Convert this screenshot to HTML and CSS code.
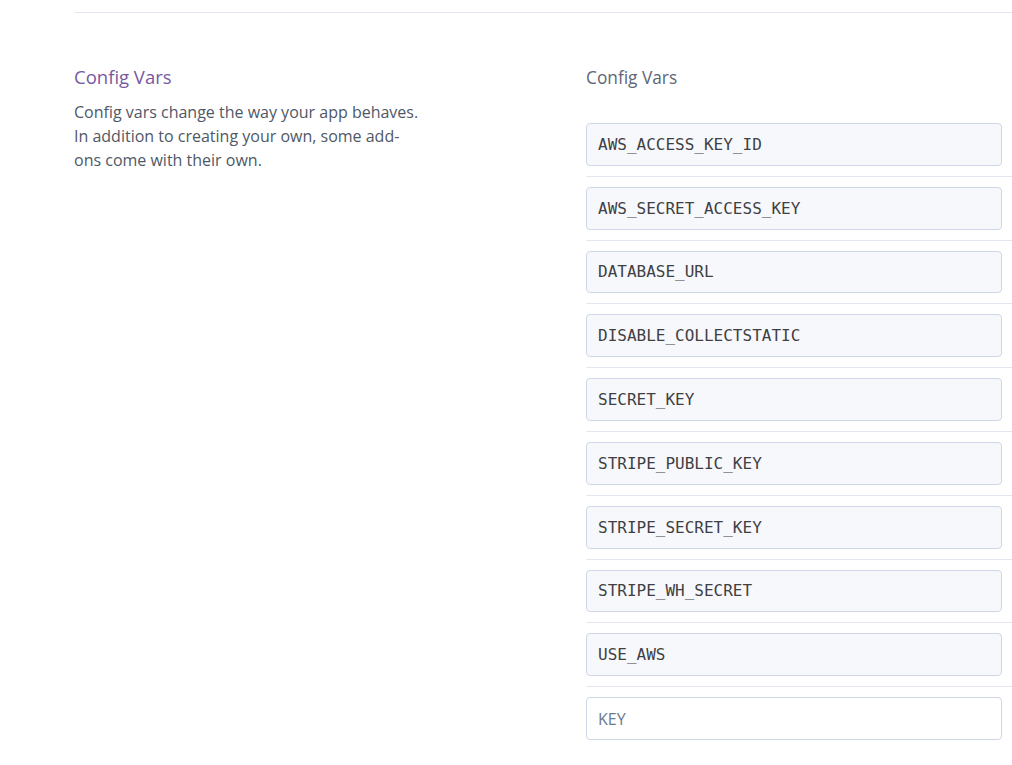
FILE: index.html
```html
<!DOCTYPE html>
<html>
<head>
<meta charset="utf-8">
<link rel="stylesheet" href="styles.css">
</head>
<body>
<div class="page">
  <section class="settings">
    <div class="info">
      <h2 class="info-title">Config Vars</h2>
      <p class="info-text">Config vars change the way your app behaves. In addition to creating your own, some add-ons come with their own.</p>
    </div>
    <div class="vars">
      <h3 class="vars-title">Config Vars</h3>
      <ul class="var-list">
        <li class="var-row"><div class="field">AWS_ACCESS_KEY_ID</div></li>
        <li class="var-row"><div class="field">AWS_SECRET_ACCESS_KEY</div></li>
        <li class="var-row"><div class="field">DATABASE_URL</div></li>
        <li class="var-row"><div class="field">DISABLE_COLLECTSTATIC</div></li>
        <li class="var-row"><div class="field">SECRET_KEY</div></li>
        <li class="var-row"><div class="field">STRIPE_PUBLIC_KEY</div></li>
        <li class="var-row"><div class="field">STRIPE_SECRET_KEY</div></li>
        <li class="var-row"><div class="field">STRIPE_WH_SECRET</div></li>
        <li class="var-row"><div class="field">USE_AWS</div></li>
        <li class="var-row last"><div class="field empty">KEY</div></li>
      </ul>
    </div>
  </section>
</div>
</body>
</html>
```

FILE: styles.css
```css
html, body {
  margin: 0;
  padding: 0;
  background: #ffffff;
}
body {
  font-family: "Open Sans", Lato, sans-serif;
  overflow: hidden;
}
.page {
  padding: 12px 0 0 74px;
}
.settings {
  border-top: 1px solid #e3e7ef;
  display: grid;
  grid-template-columns: 512px 1fr;
  padding-top: 52px;
}
.info-title {
  margin: 0;
  font-size: 18.5px;
  font-weight: 400;
  color: #79589f;
  line-height: 24px;
}
.info-text {
  margin: 11px 0 0;
  width: 352px;
  font-size: 16px;
  line-height: 24px;
  color: #4f5866;
}
.vars-title {
  margin: 1px 0 0;
  font-size: 17.3px;
  font-weight: 400;
  color: #5d6778;
  line-height: 24px;
}
.var-list {
  list-style: none;
  margin: 33px 0 0;
  padding: 0;
}
.var-row {
  padding: 10px 0 10px;
  border-bottom: 1px solid #e3e7ef;
}
.var-row:first-child {
  padding-top: 0;
}
.var-row.last {
  border-bottom: none;
}
.field {
  box-sizing: border-box;
  width: 416px;
  height: 42.8px;
  border: 1px solid #cfd7e6;
  border-radius: 4px;
  background: #f7f8fb;
  padding: 0 11px;
  display: flex;
  align-items: center;
  font-family: "DejaVu Sans Mono", monospace;
  font-size: 16px;
  color: #3f3f44;
}
.field.empty {
  background: #ffffff;
  font-family: "Open Sans", Lato, sans-serif;
  font-size: 16px;
  color: #6b7a90;
}
```
